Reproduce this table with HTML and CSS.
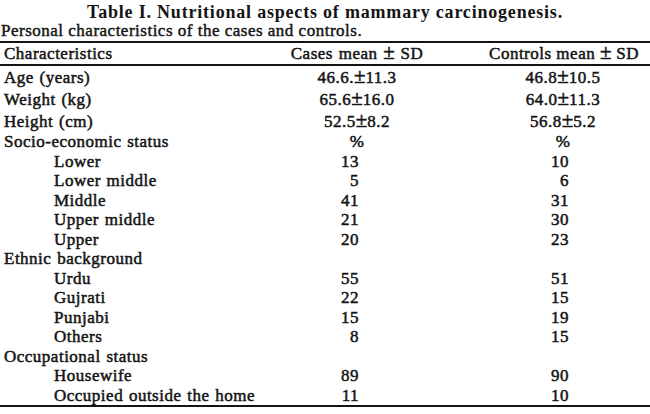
FILE: index.html
```html
<!DOCTYPE html>
<html lang="en">
<head>
<meta charset="utf-8">
<title>Table I</title>
<link rel="stylesheet" href="styles.css">
</head>
<body>
<div class="page">
  <h1 class="title">Table I. Nutritional aspects of mammary carcinogenesis.</h1>
  <p class="subtitle">Personal characteristics of the cases and controls.</p>
  <table class="data">
    <colgroup>
      <col class="c-label">
      <col class="c-cases">
      <col class="c-controls">
    </colgroup>
    <thead>
      <tr>
        <th class="lab">Characteristics</th>
        <th class="cases">Cases mean <span class="pm">±</span> SD</th>
        <th class="controls">Controls mean <span class="pm">±</span> SD</th>
      </tr>
    </thead>
    <tbody>
      <tr class="tall"><td class="lab">Age (years)</td><td class="cases mid">46.6.<span class="pm">±</span>11.3</td><td class="controls mid">46.8<span class="pm">±</span>10.5</td></tr>
      <tr class="tall"><td class="lab">Weight (kg)</td><td class="cases mid">65.6<span class="pm">±</span>16.0</td><td class="controls mid">64.0<span class="pm">±</span>11.3</td></tr>
      <tr class="tall"><td class="lab">Height (cm)</td><td class="cases mid">52.5<span class="pm">±</span>8.2</td><td class="controls mid">56.8<span class="pm">±</span>5.2</td></tr>
      <tr><td class="lab">Socio-economic status</td><td class="cases mid">%</td><td class="controls mid">%</td></tr>
      <tr><td class="lab sub">Lower</td><td class="cases num">13</td><td class="controls num">10</td></tr>
      <tr><td class="lab sub">Lower middle</td><td class="cases num">5</td><td class="controls num">6</td></tr>
      <tr><td class="lab sub">Middle</td><td class="cases num">41</td><td class="controls num">31</td></tr>
      <tr><td class="lab sub">Upper middle</td><td class="cases num">21</td><td class="controls num">30</td></tr>
      <tr><td class="lab sub">Upper</td><td class="cases num">20</td><td class="controls num">23</td></tr>
      <tr><td class="lab">Ethnic background</td><td class="cases"></td><td class="controls"></td></tr>
      <tr><td class="lab sub">Urdu</td><td class="cases num">55</td><td class="controls num">51</td></tr>
      <tr><td class="lab sub">Gujrati</td><td class="cases num">22</td><td class="controls num">15</td></tr>
      <tr><td class="lab sub">Punjabi</td><td class="cases num">15</td><td class="controls num">19</td></tr>
      <tr><td class="lab sub">Others</td><td class="cases num">8</td><td class="controls num">15</td></tr>
      <tr><td class="lab">Occupational status</td><td class="cases"></td><td class="controls"></td></tr>
      <tr><td class="lab sub">Housewife</td><td class="cases num">89</td><td class="controls num">90</td></tr>
      <tr class="last"><td class="lab sub">Occupied outside the home</td><td class="cases num">11</td><td class="controls num">10</td></tr>
    </tbody>
  </table>
</div>
</body>
</html>
```

FILE: styles.css
```css
html, body {
  margin: 0;
  padding: 0;
  background: #ffffff;
}

.page {
  width: 650px;
  height: 414px;
  overflow: hidden;
  font-family: "Liberation Serif", "Times New Roman", serif;
  color: #141414;
}

.title {
  margin: 0;
  padding-top: 3px;
  font-size: 18px;
  line-height: 18px;
  font-weight: bold;
  letter-spacing: 0.8px;
  text-align: center;
}

.subtitle {
  margin: 0;
  padding-left: 1px;
  font-size: 17px;
  line-height: 20px;
  letter-spacing: 0.5px;
  -webkit-text-stroke: 0.45px #141414;
}

.data {
  width: 650px;
  border-collapse: collapse;
  table-layout: fixed;
  font-size: 17px;
  letter-spacing: 0.5px;
  word-spacing: 1px;
}

.c-label { width: 250px; }
.c-cases { width: 214px; }
.c-controls { width: 186px; }

.data th,
.data td {
  padding: 0;
  white-space: nowrap;
  -webkit-text-stroke: 0.5px #141414;
}

.pm {
  font-size: 21px;
  line-height: 0;
  letter-spacing: 0;
}

.data thead th {
  height: 21px;
  font-weight: normal;
  border-top: 2px solid #141414;
  border-bottom: 2px solid #141414;
  line-height: 19px;
}

.data th.lab,
.data td.lab {
  text-align: left;
  padding-left: 4px;
}

.data td.sub {
  padding-left: 54px;
}

.data th.cases,
.data td.cases.mid {
  text-align: center;
}

.data th.controls {
  text-align: center;
  padding-left: 14px;
  word-spacing: 0;
}

.data td.controls.mid {
  text-align: center;
  padding-left: 12px;
}

.data td.cases.num {
  text-align: right;
  padding-right: 105px;
}

.data td.controls.num {
  text-align: right;
  padding-right: 81px;
}

.data tbody td {
  height: 19.5px;
  line-height: 19px;
}

.data tbody tr.tall td {
  height: 22px;
}

.data tbody tr.last td {
  border-bottom: 2px solid #141414;
}
```
